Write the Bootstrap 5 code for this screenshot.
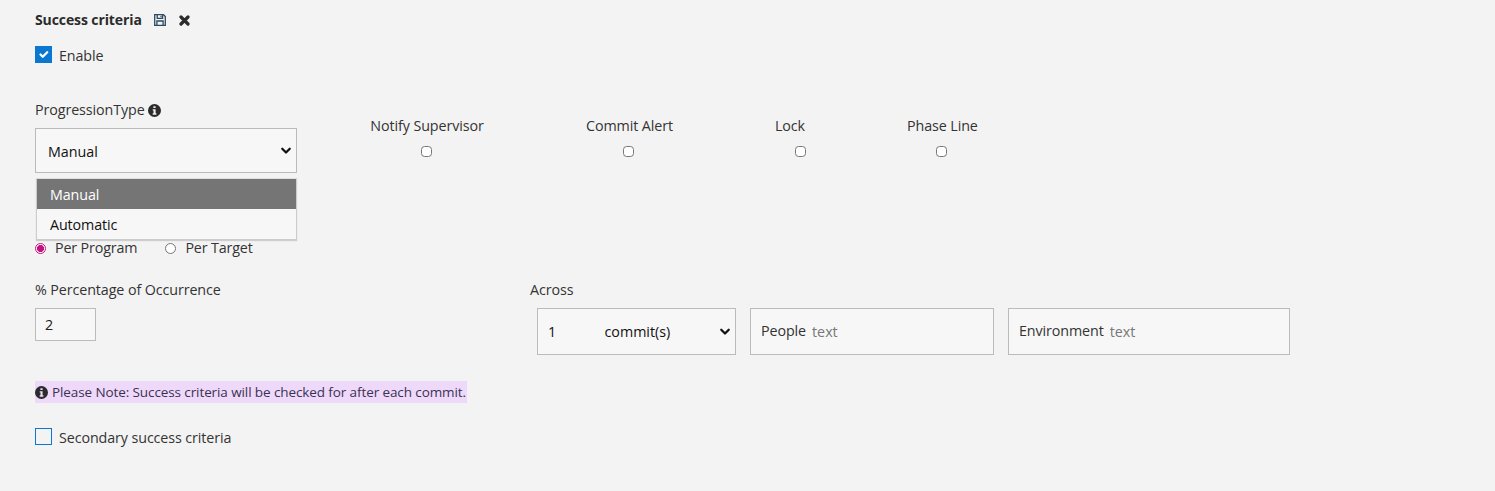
<!DOCTYPE html>
<html lang="en">
<head>
    <title>Success criteria</title>
    <meta charset="utf-8">
    <meta name="viewport" content="width=device-width, initial-scale=1">
    <link href="https://cdn.jsdelivr.net/npm/bootstrap@5.3.0/dist/css/bootstrap.min.css" rel="stylesheet">
    <script src="https://cdn.jsdelivr.net/npm/bootstrap@5.3.0/dist/js/bootstrap.bundle.min.js"></script>
    <style>
        body {
            background: #f3f3f3;
            color: #333;
            font-family: "Open Sans", "Noto Sans", sans-serif;
            font-size: 14.3px;
            line-height: 20px;
            letter-spacing: -0.1px;
        }
        .page-wrap { padding: 10px 0 0 35px; height: 491px; overflow: hidden; }
        .title-row { height: 20px; font-weight: 700; font-size: 14px; color: #2b2b2b; }
        .title-row svg { display: block; }
        .save-icon { margin-left: 11px; }
        .close-icon { margin-left: 12px; }
        .box-check[type=checkbox] { width: 17px; height: 17px; margin: 0; border-radius: 0; border: 1px solid #0a78d0; background-color: transparent; flex: none; }
        .box-check[type=checkbox]:checked { background-color: #0a78d0; border-color: #0a78d0; }
        .box-label { margin-top: 2px; }
        .enable-row { margin-top: 15px; height: 18px; gap: 7px; }
        .enable-row .box-label { margin-top: 3px; }
        .top-row { margin-top: 37px; }
        .type-col { width: 262px; position: relative; }
        .type-label { gap: 3px; }
        .type-select {
            height: 45px; border-radius: 0; border: 1px solid #bdb9b9; background-color: #f7f7f7;
            padding: 2px 12px 0; font-size: 14.3px; color: #111; margin-top: 8px;
            background-size: 12px 12px; background-position: right 4px center;
            background-image: url("data:image/svg+xml,%3csvg xmlns='http://www.w3.org/2000/svg' viewBox='0 0 16 16'%3e%3cpath fill='none' stroke='%23111' stroke-linecap='round' stroke-linejoin='round' stroke-width='3' d='m3 5 5 5 5-5'/%3e%3c/svg%3e");
        }
        .type-menu { position: absolute; left: 1px; right: 0; top: 78px; background: #f7f7f7; border: 1px solid #ccc; border-top-color: #ddd; box-shadow: 0 1px 1px rgba(0,0,0,.15); z-index: 5; }
        .type-opt { height: 30px; line-height: 31px; padding: 0 13px; color: #111; }
        .type-opt.picked { background: #757575; color: #fff; }
        .flags-row { margin-left: 73px; padding-top: 16px; }
        .flag-col { display: flex; flex-direction: column; align-items: center; gap: 10px; }
        .flag-col input { width: 11px; height: 11px; margin: 0 2px 0 0; border-radius: 2px; border: 1px solid #767676; background-color: #fff; }
        .flag-notify { width: 114px; margin-right: 101px; }
        .flag-alert { width: 89px; margin-right: 101px; }
        .flag-lock { width: 50px; margin-right: 82px; }
        .flag-lock input { margin: 0; }
        .flag-lock span { align-self: flex-start; }
        .radio-row { margin-top: 65px; height: 20px; letter-spacing: -0.15px; }
        .radio-row input { width: 11px; height: 11px; margin: 0 9px 0 0; border: 1px solid #767676; background-color: #fff; background-image: none; }
        .radio-row input:checked { border: 1px solid #c2127f; background-color: #fff; background-image: radial-gradient(circle, #c2127f 0 3.3px, transparent 3.8px); }
        .radio-row label { display: flex; align-items: center; margin-right: 28px; }
        .occur-row { margin-top: 22px; }
        .occur-col { width: 495px; }
        .occur-input { width: 61px; height: 33px; border: 1px solid #bbb; border-radius: 0; background: #f7f7f7; padding: 0 9px; font-size: 14.3px; color: #222; margin-top: 8px; }
        .across-fields { margin: 8px 0 0 7px; gap: 14px; }
        .across-select { width: 199px; height: 47px; border-radius: 0; border: 1px solid #bbb; background-color: #f7f7f7; padding: 0 10px; font-size: 14.3px; color: #111;
            background-size: 12px 12px; background-position: right 4px center;
            background-image: url("data:image/svg+xml,%3csvg xmlns='http://www.w3.org/2000/svg' viewBox='0 0 16 16'%3e%3cpath fill='none' stroke='%23111' stroke-linecap='round' stroke-linejoin='round' stroke-width='3' d='m3 5 5 5 5-5'/%3e%3c/svg%3e");
            white-space: pre; }
        .text-field { height: 47px; border: 1px solid #bbb; background: #f7f7f7; padding: 0 10px; display: flex; align-items: center; gap: 6px; }
        .text-field span { margin-top: -2px; }
        .text-field input { border: 0; background: transparent; outline: 0; padding: 0; flex: 1; min-width: 0; font-size: 14.3px; }
        .text-field input::placeholder { color: #777; opacity: 1; }
        .people-field { width: 244px; }
        .env-field { width: 282px; }
        .note-text { display: inline-flex; align-items: center; gap: 4px; margin-top: 26px; height: 22px; background: #efd9fb; font-size: 13.5px; color: #3a3350; padding-right: 1px; }
        .second-row { margin-top: 22px; gap: 7px; }
    </style>
</head>
<body>
<div class="page-wrap">
    <div class="title-row d-flex align-items-center">
        <span>Success criteria</span>
        <svg class="save-icon" width="14" height="14" viewBox="0 0 14 14" fill="none" stroke="#2c4a63" stroke-width="1.3">
            <path d="M1.7 1.7H10.5L12.3 3.5V12.3H1.7Z"/>
            <path d="M4.2 1.7V5.3H9.6V1.7M3.9 12.3V8H10.1V12.3"/>
            <path d="M8 2.8V4.3" stroke-width="1.2"/>
        </svg>
        <svg class="close-icon" width="11" height="11" viewBox="0 0 11 11">
            <path d="M2 2 9 9M9 2 2 9" stroke="#2b2b2b" stroke-width="3.2" stroke-linecap="round"/>
        </svg>
    </div>

    <div class="enable-row d-flex align-items-center">
        <input class="form-check-input box-check" type="checkbox" id="enable" checked>
        <label class="box-label" for="enable">Enable</label>
    </div>

    <div class="top-row d-flex align-items-start">
        <div class="type-col">
            <div class="type-label d-flex align-items-center">
                <span>ProgressionType</span>
                <svg width="13" height="13" viewBox="0 0 13 13"><path fill="#2b2b2b" fill-rule="evenodd" d="M6.5 0a6.5 6.5 0 1 0 0 13 6.5 6.5 0 0 0 0-13ZM5.4 2.2h2.2v1.8H5.4ZM4.7 5.2h2.9v4.1h.8v1.4H4.7V9.3h.8V6.6h-.8Z"/></svg>
            </div>
            <select class="form-select type-select">
                <option>Manual</option>
                <option>Automatic</option>
            </select>
            <div class="type-menu">
                <div class="type-opt picked">Manual</div>
                <div class="type-opt">Automatic</div>
            </div>
        </div>
        <div class="flags-row d-flex">
            <div class="flag-col flag-notify"><span>Notify Supervisor</span><input class="form-check-input" type="checkbox"></div>
            <div class="flag-col flag-alert"><span>Commit Alert</span><input class="form-check-input" type="checkbox"></div>
            <div class="flag-col flag-lock"><span>Lock</span><input class="form-check-input" type="checkbox"></div>
            <div class="flag-col"><span>Phase Line</span><input class="form-check-input" type="checkbox"></div>
        </div>
    </div>

    <div class="radio-row d-flex">
        <label><input class="form-check-input" type="radio" name="scope" checked>Per Program</label>
        <label><input class="form-check-input" type="radio" name="scope">Per Target</label>
    </div>

    <div class="occur-row d-flex">
        <div class="occur-col">
            <div>% Percentage of Occurrence</div>
            <input class="form-control occur-input" type="text" value="2">
        </div>
        <div>
            <div>Across</div>
            <div class="across-fields d-flex">
                <select class="form-select across-select">
                    <option>1&#160;&#160;&#160;&#160;&#160;&#160;&#160;&#160;&#160;&#160;&#160;&#160;&#160;commit(s)</option>
                </select>
                <div class="text-field people-field"><span>People</span><input type="text" placeholder="text"></div>
                <div class="text-field env-field"><span>Environment</span><input type="text" placeholder="text"></div>
            </div>
        </div>
    </div>

    <div>
        <span class="note-text">
            <svg width="13" height="13" viewBox="0 0 13 13"><path fill="#2b2b2b" fill-rule="evenodd" d="M6.5 0a6.5 6.5 0 1 0 0 13 6.5 6.5 0 0 0 0-13ZM5.4 2.2h2.2v1.8H5.4ZM4.7 5.2h2.9v4.1h.8v1.4H4.7V9.3h.8V6.6h-.8Z"/></svg>
            Please Note: Success criteria will be checked for after each commit.
        </span>
    </div>

    <div class="second-row d-flex align-items-center">
        <input class="form-check-input box-check" type="checkbox" id="secondary">
        <label class="box-label" for="secondary">Secondary success criteria</label>
    </div>
</div>
</body>
</html>
